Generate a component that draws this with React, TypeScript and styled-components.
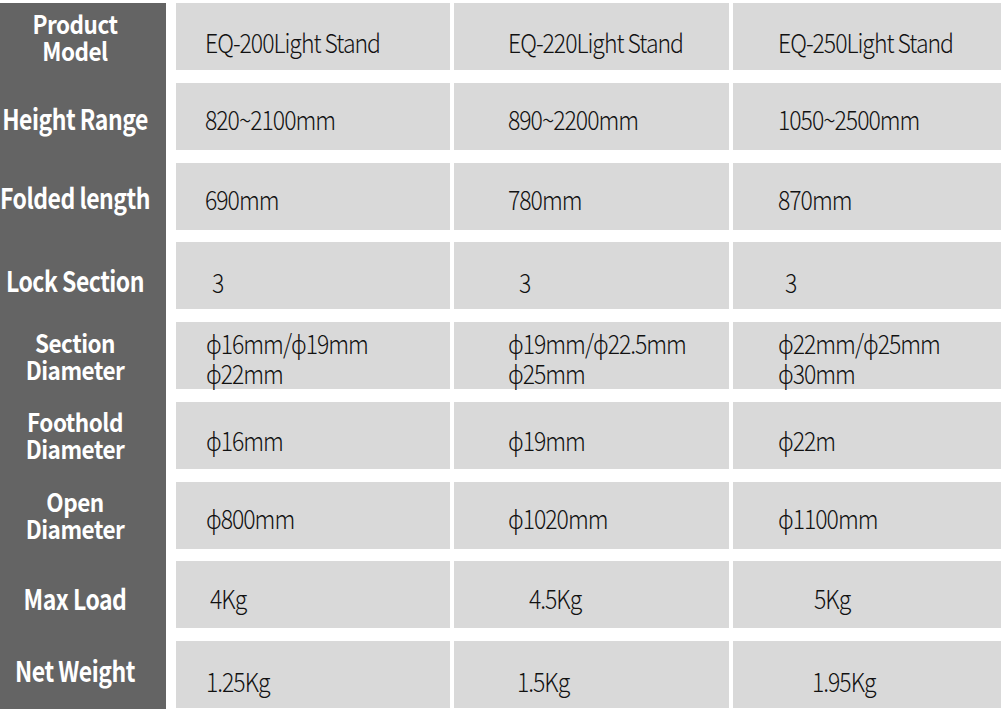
import React from 'react';
import styled, { createGlobalStyle } from 'styled-components';

type Spec = {
    label: string[];
    labelShift?: number;
    values: { text: string[]; indent: number }[];
    shift?: number;
};

const specs: Spec[] = [
    {
        label: ['Product', 'Model'],
        shift: 4,
        values: [
            { text: ['EQ-200Light Stand'], indent: 29 },
            { text: ['EQ-220Light Stand'], indent: 54 },
            { text: ['EQ-250Light Stand'], indent: 45 },
        ],
    },
    {
        label: ['Height Range'],
        labelShift: 2,
        values: [
            { text: ['820~2100mm'], indent: 29 },
            { text: ['890~2200mm'], indent: 54 },
            { text: ['1050~2500mm'], indent: 45 },
        ],
    },
    {
        label: ['Folded length'],
        labelShift: 1,
        values: [
            { text: ['690mm'], indent: 29 },
            { text: ['780mm'], indent: 54 },
            { text: ['870mm'], indent: 45 },
        ],
    },
    {
        label: ['Lock Section'],
        labelShift: 5,
        shift: 5,
        values: [
            { text: ['3'], indent: 36 },
            { text: ['3'], indent: 65 },
            { text: ['3'], indent: 52 },
        ],
    },
    {
        label: ['Section', 'Diameter'],
        shift: 1,
        values: [
            { text: ['ϕ16mm/ϕ19mm', 'ϕ22mm'], indent: 30 },
            { text: ['ϕ19mm/ϕ22.5mm', 'ϕ25mm'], indent: 54 },
            { text: ['ϕ22mm/ϕ25mm', 'ϕ30mm'], indent: 45 },
        ],
    },
    {
        label: ['Foothold', 'Diameter'],
        shift: 4,
        values: [
            { text: ['ϕ16mm'], indent: 30 },
            { text: ['ϕ19mm'], indent: 54 },
            { text: ['ϕ22m'], indent: 45 },
        ],
    },
    {
        label: ['Open', 'Diameter'],
        shift: 2,
        values: [
            { text: ['ϕ800mm'], indent: 30 },
            { text: ['ϕ1020mm'], indent: 54 },
            { text: ['ϕ1100mm'], indent: 45 },
        ],
    },
    {
        label: ['Max Load'],
        labelShift: 4,
        shift: 2,
        values: [
            { text: ['4Kg'], indent: 34 },
            { text: ['4.5Kg'], indent: 75 },
            { text: ['5Kg'], indent: 81 },
        ],
    },
    {
        label: ['Net Weight'],
        labelShift: -4,
        shift: 5,
        values: [
            { text: ['1.25Kg'], indent: 30 },
            { text: ['1.5Kg'], indent: 63 },
            { text: ['1.95Kg'], indent: 79 },
        ],
    },
];

const App = () => (
    <>
        <GlobalStyle />
        <Table>
            <LabelColumn>
                {specs.map(spec => (
                    <Label
                        key={spec.label.join(' ')}
                        $shift={spec.labelShift ?? 0}
                        $single={spec.label.length === 1}
                    >
                        {spec.label.map(line => (
                            <span key={line}>{line}</span>
                        ))}
                    </Label>
                ))}
            </LabelColumn>
            <Grid>
                {specs.map(spec =>
                    spec.values.map((value, i) => (
                        <Cell
                            key={spec.label.join(' ') + i}
                            $indent={value.indent}
                            $shift={spec.shift ?? 2}
                        >
                            {value.text.map(line => (
                                <span key={line}>{line}</span>
                            ))}
                        </Cell>
                    ))
                )}
            </Grid>
        </Table>
    </>
);

export default App;

const GlobalStyle = createGlobalStyle`
    html, body {
        margin: 0;
        padding: 0;
        background: #ffffff;
        overflow: hidden;
    }
`;

const Table = styled.div`
    display: flex;
    align-items: flex-start;
    padding-top: 3px;
    width: 1001px;
    height: 711px;
    box-sizing: border-box;
`;

const LabelColumn = styled.div`
    flex: 0 0 166px;
    width: 166px;
    min-width: 0;
    overflow: hidden;

    display: flex;
    flex-direction: column;
    gap: 12.75px;

    background-color: #646464;
    padding-bottom: 1px;
`;

const Label = styled.div<{ $shift: number; $single: boolean }>`
    height: 67px;
    padding-right: 16px;
    padding-top: ${p => Math.max(p.$shift, 0) * 2}px;
    padding-bottom: ${p => Math.max(-p.$shift, 0) * 2}px;
    box-sizing: border-box;

    display: flex;
    flex-direction: column;
    justify-content: center;
    align-items: center;

    color: #ffffff;
    font-family: 'Noto Sans CJK KR', 'Noto Sans', sans-serif;
    font-weight: 700;
    font-size: ${p => (p.$single ? 23 : 22.5)}px;
    line-height: 27px;
    letter-spacing: -0.5px;
    white-space: nowrap;

    span {
        display: block;
        transform: scaleY(${p => (p.$single ? 1.2 : 1.1)});
    }
`;

const Grid = styled.div`
    flex: 0 0 auto;
    margin-left: 10px;

    display: grid;
    grid-template-columns: 274px 275px 275px;
    grid-auto-rows: 67px;
    column-gap: 4px;
    row-gap: 12.75px;
`;

const Cell = styled.div<{ $indent: number; $shift: number }>`
    display: flex;
    flex-direction: column;
    justify-content: center;
    align-items: flex-start;

    padding-left: ${p => p.$indent}px;
    padding-top: ${p => p.$shift * 2}px;
    box-sizing: border-box;

    background-color: #d9d9d9;
    color: #111111;
    font-family: 'Noto Sans CJK KR', 'Noto Sans', sans-serif;
    font-weight: 300;
    font-size: 23px;
    line-height: 30px;
    letter-spacing: -1px;
    white-space: nowrap;

    span {
        display: block;
        transform: scaleY(1.15);
    }
`;
